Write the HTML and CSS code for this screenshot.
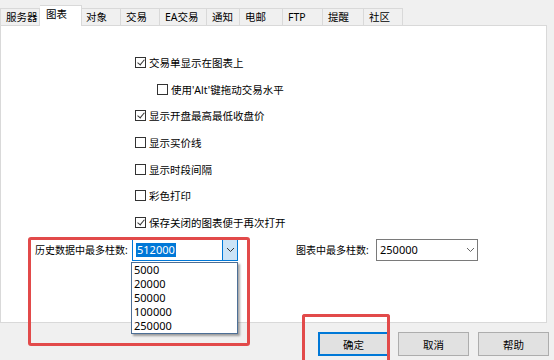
FILE: index.html
```html
<!DOCTYPE html>
<html lang="zh-CN">
<head>
    <meta charset="UTF-8">
    <title>选项 - 图表</title>
    <link rel="stylesheet" href="styles.css">
</head>
<body>
    <div class="tabs">
        <div class="tab">服务器</div>
        <div class="tab active">图表</div>
        <div class="tab">对象</div>
        <div class="tab">交易</div>
        <div class="tab">EA交易</div>
        <div class="tab">通知</div>
        <div class="tab">电邮</div>
        <div class="tab">FTP</div>
        <div class="tab">提醒</div>
        <div class="tab">社区</div>
    </div>

    <div class="panel">
        <div class="options">
            <label class="row"><span class="box checked"></span>交易单显示在图表上</label>
            <label class="row sub"><span class="box"></span>使用'Alt'键拖动交易水平</label>
            <label class="row"><span class="box checked"></span>显示开盘最高最低收盘价</label>
            <label class="row"><span class="box"></span>显示买价线</label>
            <label class="row"><span class="box"></span>显示时段间隔</label>
            <label class="row"><span class="box"></span>彩色打印</label>
            <label class="row"><span class="box checked"></span>保存关闭的图表便于再次打开</label>
        </div>

        <div class="limits">
            <span class="limit-label">历史数据中最多柱数:</span>
            <div class="combo open">
                <span class="combo-value"><span class="selected-text">512000</span></span>
                <span class="combo-arrow">
                    <svg width="9" height="6" viewBox="0 0 9 6"><polyline points="1,1 4.5,4.5 8,1" fill="none" stroke="#333" stroke-width="1"/></svg>
                </span>
            </div>
            <span class="limit-label right">图表中最多柱数:</span>
            <div class="combo small">
                <span class="combo-value">250000</span>
                <span class="combo-arrow">
                    <svg width="9" height="6" viewBox="0 0 9 6"><polyline points="1,1 4.5,4.5 8,1" fill="none" stroke="#666" stroke-width="1"/></svg>
                </span>
            </div>
        </div>

        <ul class="droplist">
            <li>5000</li>
            <li>20000</li>
            <li>50000</li>
            <li>100000</li>
            <li>250000</li>
        </ul>
    </div>

    <div class="footer">
        <button class="btn default">确定</button>
        <button class="btn">取消</button>
        <button class="btn">帮助</button>
    </div>

    <!-- 标注框 -->
    <div class="mark mark-limits"></div>
    <div class="mark mark-ok"></div>
</body>
</html>
```

FILE: styles.css
```css
body {
    margin: 0;
    width: 554px;
    height: 360px;
    overflow: hidden;
    position: relative;
    background-color: #f0f0f0;
    font-family: "Noto Sans", "Noto Sans CJK SC", sans-serif;
    font-size: 10.5px;
    color: #000;
}

.tabs {
    display: flex;
    align-items: flex-end;
    height: 25px;
}

.tab {
    height: 17px;
    line-height: 16px;
    padding-left: 5px;
    box-sizing: border-box;
    border: 1px solid #d9d9d9;
    border-bottom: none;
    border-left: none;
    background-color: #f0f0f0;
    white-space: nowrap;
}

.tab:nth-child(1) { width: 40px; border-left: 1px solid #d9d9d9; }
.tab:nth-child(3) { width: 39px; padding-left: 4px; }
.tab:nth-child(4) { width: 39px; }
.tab:nth-child(5) { width: 47px; }
.tab:nth-child(6) { width: 33px; }
.tab:nth-child(7) { width: 43px; }
.tab:nth-child(8) { width: 40px; }
.tab:nth-child(9) { width: 41px; }
.tab:nth-child(10) { width: 39px; }

.tab.active {
    width: 42px;
    height: 21px;
    margin-bottom: -1px;
    line-height: 17px;
    padding-left: 6px;
    background-color: #fff;
    border-left: none;
    position: relative;
    z-index: 1;
}

.panel {
    position: relative;
    width: 547px;
    height: 298px;
    box-sizing: border-box;
    background-color: #fff;
    border: 1px solid #d9d9d9;
}

.options {
    padding: 23px 0 0 134px;
}

.row {
    display: flex;
    align-items: center;
    gap: 3px;
    height: 26.7px;
}

.row.sub {
    padding-left: 22px;
}

.box {
    width: 11px;
    height: 11px;
    box-sizing: border-box;
    border: 1px solid #333;
    position: relative;
}

.box.checked::after {
    content: "";
    position: absolute;
    left: 3px;
    top: 0px;
    width: 3px;
    height: 6px;
    border: solid #333;
    border-width: 0 1px 1px 0;
    transform: rotate(40deg);
}

.limits {
    display: flex;
    align-items: center;
    margin-top: 3px;
    height: 22px;
    padding-left: 34px;
}

.limit-label {
    width: 97px;
    flex-shrink: 0;
    font-size: 10px;
    white-space: nowrap;
}

.limit-label.right {
    width: 80px;
    margin-left: 58px;
}

.combo {
    display: flex;
    flex-shrink: 0;
    width: 106px;
    height: 22px;
    box-sizing: border-box;
    border: 1px solid #7a7a7a;
    background-color: #fff;
}

.combo.open {
    border-color: #0078d7;
}

.combo.small {
    width: 102px;
}

.combo-value {
    flex: 1;
    display: flex;
    align-items: center;
    padding-left: 3px;
    font-size: 11px;
}

.selected-text {
    background-color: #0078d7;
    color: #fff;
    line-height: 14px;
    padding: 0 1px;
}

.combo-arrow {
    width: 14px;
    display: flex;
    align-items: center;
    justify-content: center;
}

.combo.open .combo-arrow {
    background-color: #cce4f7;
    border-left: 1px solid #0078d7;
}

.droplist {
    position: absolute;
    left: 130px;
    top: 236px;
    width: 107px;
    height: 72px;
    box-sizing: border-box;
    margin: 0;
    padding: 0 0 0 2px;
    list-style: none;
    background-color: #fff;
    border: 1px solid #4d6f96;
    box-shadow: 2px 2px 2px rgba(0, 0, 0, 0.35);
    font-size: 11px;
    z-index: 2;
}

.droplist li {
    height: 14px;
    line-height: 14px;
}

.footer {
    display: flex;
    justify-content: flex-end;
    gap: 9px;
    padding: 9px 5px 0 0;
}

.btn {
    width: 71px;
    height: 24px;
    padding: 0;
    font-family: inherit;
    font-size: 10.5px;
    background-color: #e1e1e1;
    border: 1px solid #adadad;
    color: #000;
}

.btn.default {
    border-color: #0078d7;
    box-shadow: inset 0 0 0 1px #0078d7;
}

.mark {
    position: absolute;
    border: 3px solid #e24a4a;
    border-radius: 3px;
    z-index: 3;
}

.mark-limits {
    left: 28px;
    top: 237px;
    width: 216px;
    height: 103px;
}

.mark-ok {
    left: 302px;
    top: 314px;
    width: 82px;
    height: 43px;
    border-bottom: none;
    border-radius: 3px 3px 0 0;
}
```
